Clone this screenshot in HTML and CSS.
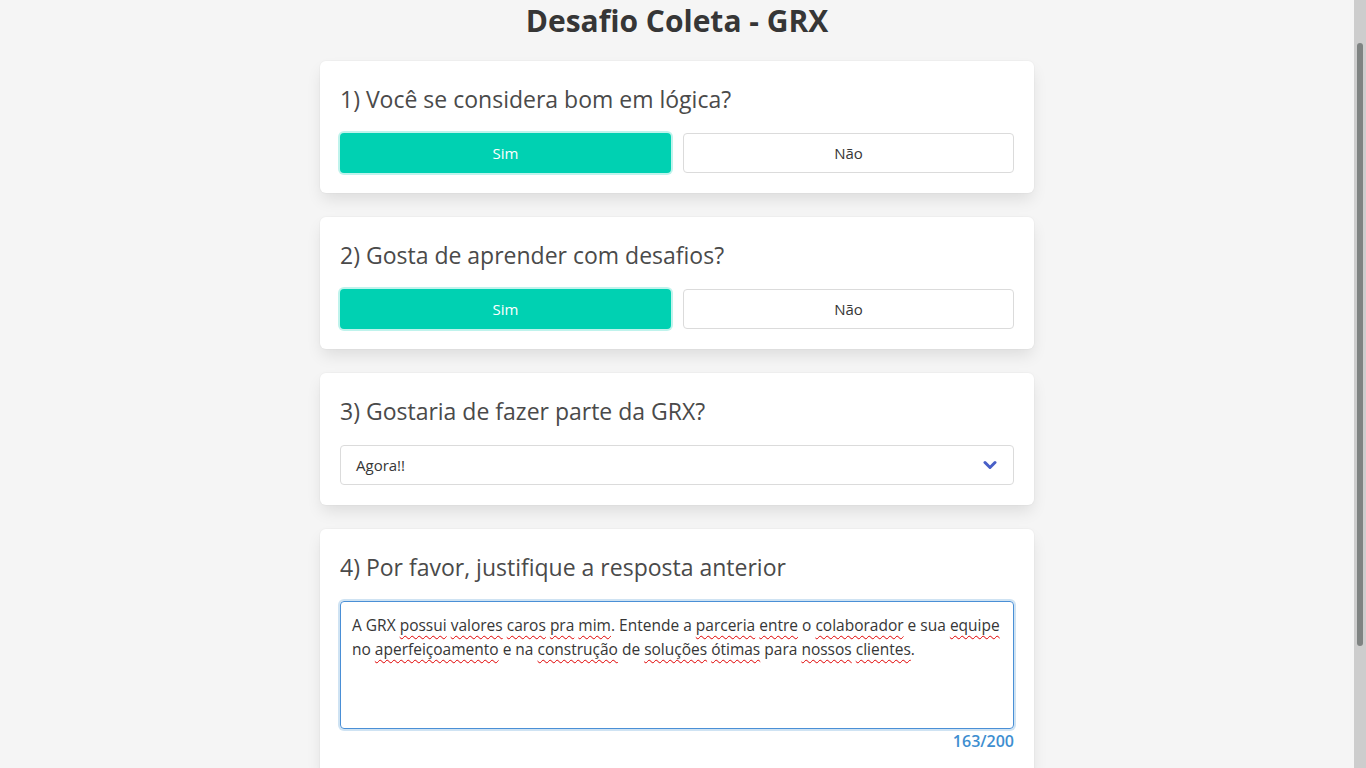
FILE: index.html
```html
<!DOCTYPE html>
<html lang="pt-BR">
<head>
<meta charset="utf-8">
<title>Desafio Coleta - GRX</title>
<link rel="stylesheet" href="styles.css">
</head>
<body>
<div class="viewport">
  <main class="container">
    <h1 class="page-title">Desafio Coleta - GRX</h1>

    <section class="box">
      <h2 class="question">1) Você se considera bom em lógica?</h2>
      <div class="choices">
        <button class="btn btn-primary" type="button">Sim</button>
        <button class="btn" type="button">Não</button>
      </div>
    </section>

    <section class="box">
      <h2 class="question">2) Gosta de aprender com desafios?</h2>
      <div class="choices">
        <button class="btn btn-primary" type="button">Sim</button>
        <button class="btn" type="button">Não</button>
      </div>
    </section>

    <section class="box">
      <h2 class="question">3) Gostaria de fazer parte da GRX?</h2>
      <div class="select">
        <span class="select-value">Agora!!</span>
        <svg class="chevron" width="14" height="10" viewBox="0 0 14 10" aria-hidden="true">
          <polyline points="2,2.5 7,7.5 12,2.5" fill="none" stroke="#485fc7" stroke-width="3" stroke-linecap="round" stroke-linejoin="round"/>
        </svg>
      </div>
    </section>

    <section class="box">
      <h2 class="question">4) Por favor, justifique a resposta anterior</h2>
      <div class="textarea" contenteditable="true" spellcheck="false">A GRX <span class="sp">possui</span> <span class="sp">valores</span> <span class="sp">caros</span> <span class="sp">pra</span> <span class="sp">mim</span>. Entende a <span class="sp">parceria</span> <span class="sp">entre</span> o <span class="sp">colaborador</span> e sua <span class="sp">equipe</span> no <span class="sp">aperfeiçoamento</span> e na <span class="sp">construção</span> de <span class="sp">soluções</span> <span class="sp">ótimas</span> para <span class="sp">nossos</span> <span class="sp">clientes</span>.</div>
      <div class="counter">163/200</div>
    </section>
  </main>
</div>
<div class="scrollbar" aria-hidden="true"><div class="scrollbar-thumb"></div></div>
</body>
</html>
```

FILE: styles.css
```css
html {
  background: #f5f5f5;
}

body {
  margin: 0;
  height: 100vh;
  overflow: hidden;
  display: grid;
  grid-template-columns: 1fr 12px;
  font-family: "Open Sans", "Noto Sans", sans-serif;
  color: #363636;
}

.viewport {
  height: 100vh;
  overflow-y: auto;
  scrollbar-width: none;
}
.viewport::-webkit-scrollbar {
  display: none;
}

.scrollbar {
  background: #cdcdcd;
  padding: 43px 3px 0;
}

.scrollbar-thumb {
  height: 603px;
  border-radius: 3px;
  background: #7f8382;
}

.container {
  width: 714px;
  margin: 0 auto;
  padding-bottom: 190px;
  display: flex;
  flex-direction: column;
  gap: 24px;
}

.page-title {
  margin: 0;
  padding-top: 5px;
  font-size: 30px;
  line-height: 32px;
  font-weight: 700;
  text-align: center;
  color: #363636;
}

.box {
  background: #fff;
  border-radius: 6px;
  padding: 20px;
  box-shadow: 0 8px 16px -2px rgba(10, 10, 10, 0.1), 0 0 0 1px rgba(10, 10, 10, 0.02);
}

.question {
  margin: 0 0 20px;
  padding-top: 5px;
  font-size: 23px;
  line-height: 27px;
  font-weight: 400;
  color: #4a4a4a;
}

.choices {
  display: grid;
  grid-template-columns: 1fr 1fr;
  gap: 12px;
}

.btn {
  height: 40px;
  border: 1px solid #dbdbdb;
  border-radius: 4px;
  background: #fff;
  color: #363636;
  font-family: inherit;
  font-size: 15px;
  padding: 0 16px;
}

.btn-primary {
  background: #00d1b2;
  border-color: transparent;
  color: #fff;
  box-shadow: 0 0 0 2px rgba(0, 209, 178, 0.25);
}

.select {
  height: 40px;
  box-sizing: border-box;
  border: 1px solid #dbdbdb;
  border-radius: 4px;
  display: flex;
  align-items: center;
  justify-content: space-between;
  padding: 0 16px 0 15px;
  font-size: 15px;
}

.textarea {
  height: 128px;
  box-sizing: border-box;
  border: 1px solid #4a8fd6;
  border-radius: 4px;
  box-shadow: 0 0 0 2px rgba(62, 142, 208, 0.25);
  padding: 11px 11px;
  font-size: 15.5px;
  line-height: 24px;
  color: #363636;
  outline: none;
}

.sp {
  text-decoration: underline wavy #e00000;
  text-decoration-thickness: 1px;
  text-underline-offset: 4px;
}

.counter {
  text-align: right;
  font-size: 16px;
  line-height: 24px;
  font-weight: 600;
  color: #3e8ed0;
}
```
